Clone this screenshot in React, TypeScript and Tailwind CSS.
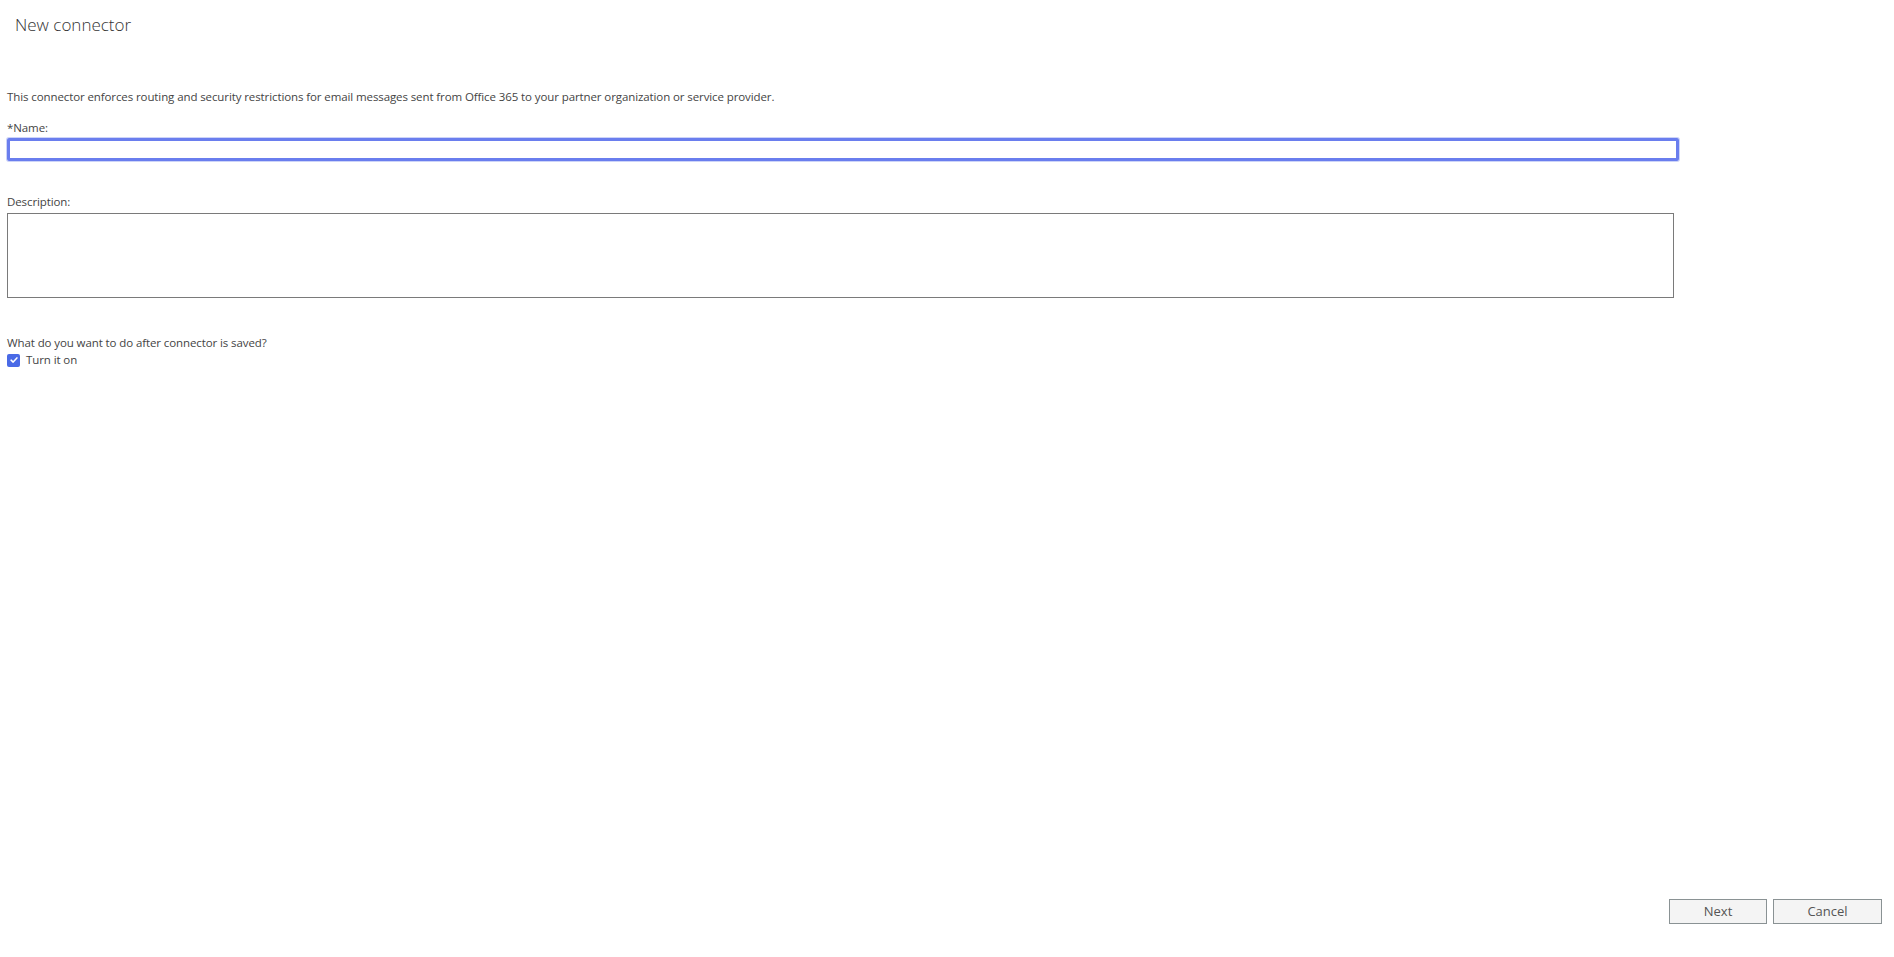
import { useState } from "react";

export default function App() {
  const [name, setName] = useState("");
  const [desc, setDesc] = useState("");
  const [turnOn, setTurnOn] = useState(true);

  return (
    <div
      className="flex h-screen flex-col bg-white text-[#444]"
      style={{ fontFamily: '"Open Sans", "Noto Sans", sans-serif' }}
    >
      <h1 className="pl-[15px] pt-[13px] text-[17px] font-light leading-[24px] text-[#333]">New connector</h1>

      <div className="px-[7px] pt-[52px] text-[11.5px] leading-[16px] tracking-[-0.1px]">
        <p>
          This connector enforces routing and security restrictions for email messages sent from Office 365 to your partner organization or service provider.
        </p>

        <label className="mt-[15px] block">*Name:</label>
        <input
          value={name}
          onChange={e => setName(e.target.value)}
          className="mt-[2px] block h-[23px] w-[1672px] rounded-[2px] border-[3px] border-[#6a7eee] px-1 text-[12px] outline-none shadow-[0_0_0_1px_#cdd4f8]"
        />

        <label className="mt-[33px] block">Description:</label>
        <textarea
          value={desc}
          onChange={e => setDesc(e.target.value)}
          className="mt-[3px] block h-[85px] w-[1667px] resize-none border border-[#7a7a7a] px-1 text-[12px] outline-none"
        />

        <p className="mt-[37px]">What do you want to do after connector is saved?</p>
        <label className="mt-[1px] flex items-center gap-[6px]">
          <button
            type="button"
            onClick={() => setTurnOn(!turnOn)}
            className={`flex h-[13px] w-[13px] items-center justify-center rounded-[2px] ${turnOn ? "bg-[#4a6ae6]" : "border border-[#767676] bg-white"}`}
          >
            {turnOn && (
              <svg viewBox="0 0 12 12" className="h-[10px] w-[10px]" fill="none" stroke="white" strokeWidth="1.8" strokeLinecap="round" strokeLinejoin="round">
                <path d="M2.5 6.2 5 8.5 9.5 3.5" />
              </svg>
            )}
          </button>
          Turn it on
        </label>
      </div>

      <div className="mt-auto flex justify-end gap-[6px] pb-[33px] pr-[12px]">
        <button className="h-[25px] w-[98px] border border-[#8a9294] bg-[#f4f4f4] text-[13px] text-[#555]">Next</button>
        <button className="h-[25px] w-[109px] border border-[#8a9294] bg-[#f4f4f4] text-[13px] text-[#555]">Cancel</button>
      </div>
    </div>
  );
}
